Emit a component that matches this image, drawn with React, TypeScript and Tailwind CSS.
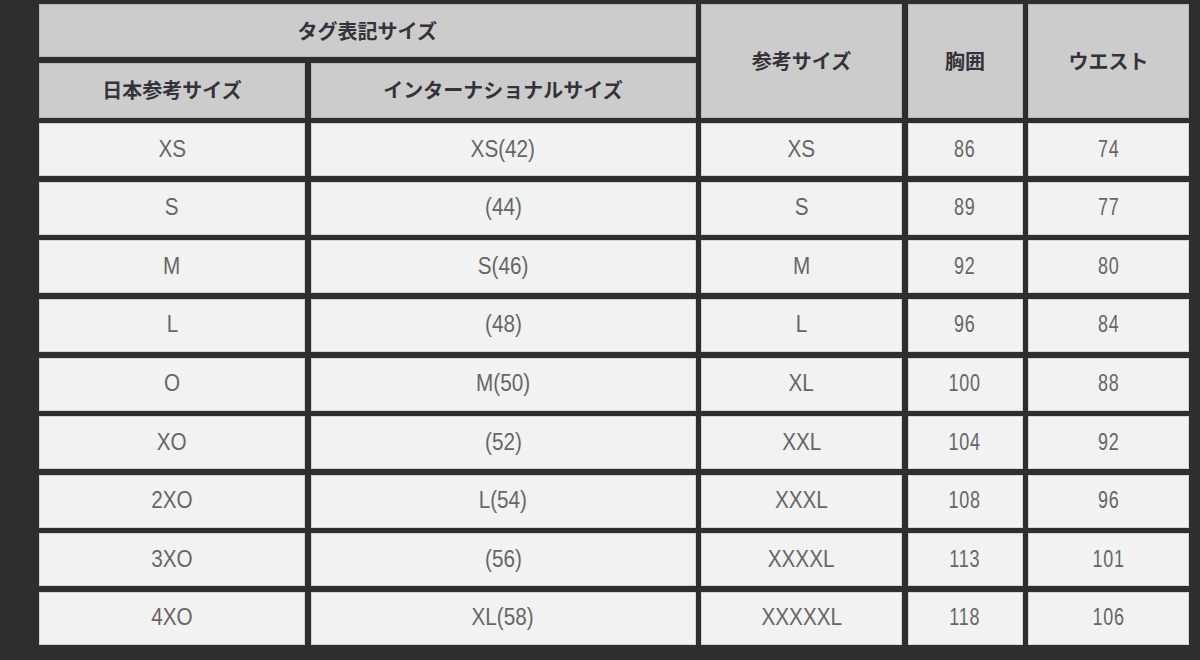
const rows = [
  ["XS", "XS(42)", "XS", "86", "74"],
  ["S", "(44)", "S", "89", "77"],
  ["M", "S(46)", "M", "92", "80"],
  ["L", "(48)", "L", "96", "84"],
  ["O", "M(50)", "XL", "100", "88"],
  ["XO", "(52)", "XXL", "104", "92"],
  ["2XO", "L(54)", "XXXL", "108", "96"],
  ["3XO", "(56)", "XXXXL", "113", "101"],
  ["4XO", "XL(58)", "XXXXXL", "118", "106"],
];

const head =
  "flex items-center justify-center bg-[#cccccc] border border-[#b8b8b8] text-[20px] font-bold text-[#35323a] [font-family:'Noto_Sans_CJK_JP',sans-serif]";
const cell =
  "flex items-center justify-center bg-[#f2f2f2] border border-[#d4d4d4] text-[23px] leading-none text-[#666666] [font-family:'Liberation_Sans',sans-serif]";

// body text is narrower than the plain font, so squeeze it a bit
function Txt({ v }: { v: string }) {
  return <span className="inline-block scale-x-[0.9] -mt-[1px]">{v}</span>;
}

function Num({ v }: { v: string }) {
  return (
    <span className="inline-block scale-x-[0.78] tracking-[1px] -mt-[1px]">{v}</span>
  );
}

export default function App() {
  return (
    <div className="min-h-screen w-[1200px] h-[660px] overflow-hidden bg-[#2e2e2e] pl-[39px] pt-[4px]">
      <div className="grid grid-cols-[266px_385px_201px_115px_161px] grid-rows-[53px_55px_repeat(9,53px)] gap-x-[5.5px] gap-y-[5.6px]">
        <div className={`${head} col-span-2`}>タグ表記サイズ</div>
        <div className={`${head} row-span-2`}>参考サイズ</div>
        <div className={`${head} row-span-2`}>胸囲</div>
        <div className={`${head} row-span-2`}>ウエスト</div>
        <div className={head}>日本参考サイズ</div>
        <div className={head}>インターナショナルサイズ</div>
        {rows.map((r) => [
          <div key={r[0] + "a"} className={cell}><Txt v={r[0]} /></div>,
          <div key={r[0] + "b"} className={cell}><Txt v={r[1]} /></div>,
          <div key={r[0] + "c"} className={cell}><Txt v={r[2]} /></div>,
          <div key={r[0] + "d"} className={cell}><Num v={r[3]} /></div>,
          <div key={r[0] + "e"} className={cell}><Num v={r[4]} /></div>,
        ])}
      </div>
    </div>
  );
}
